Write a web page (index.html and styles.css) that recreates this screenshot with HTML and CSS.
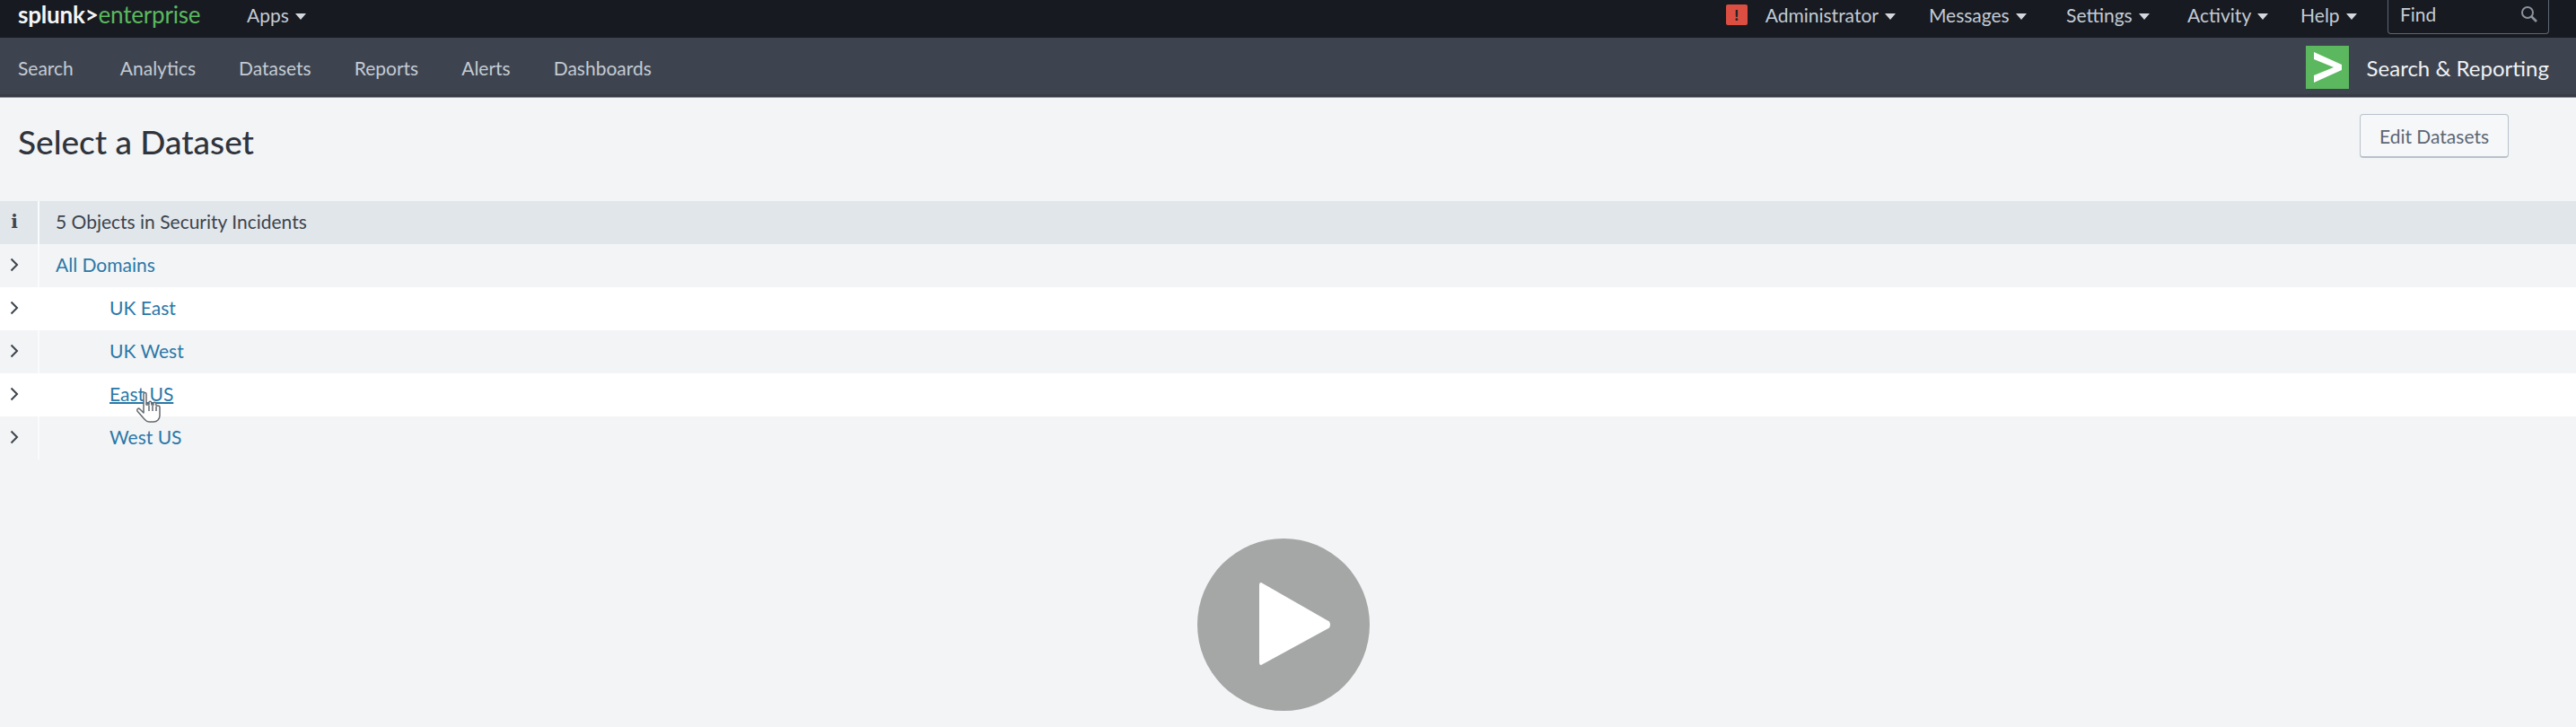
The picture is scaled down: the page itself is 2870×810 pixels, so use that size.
FILE: index.html
```html
<!DOCTYPE html>
<html lang="en">
<head>
  <meta charset="UTF-8">
  <title>Select a Dataset</title>
  <link rel="stylesheet" href="styles.css">
</head>
<body>
  <div class="topbar">
    <a class="brand"><span class="brand_splunk">splunk&gt;</span><span class="brand_product">enterprise</span></a>
    <a class="menu apps">Apps <i class="caret"></i></a>
    <div class="topbar_right">
      <span class="alert_badge">!</span>
      <a class="menu admin">Administrator <i class="caret"></i></a>
      <a class="menu messages">Messages <i class="caret"></i></a>
      <a class="menu settings">Settings <i class="caret"></i></a>
      <a class="menu activity">Activity <i class="caret"></i></a>
      <a class="menu help">Help <i class="caret"></i></a>
      <div class="find">
        <span>Find</span>
        <svg class="find_icon" width="20" height="20" viewBox="0 0 20 20" fill="none" stroke="#8b929b" stroke-width="2">
          <circle cx="8" cy="8" r="6"/>
          <path d="M12.5 12.5 L18 18" stroke-width="2.6"/>
        </svg>
      </div>
    </div>
  </div>

  <div class="appbar">
    <a class="tab tab_first">Search</a>
    <a class="tab">Analytics</a>
    <a class="tab">Datasets</a>
    <a class="tab">Reports</a>
    <a class="tab">Alerts</a>
    <a class="tab">Dashboards</a>
    <div class="app_label">
      <svg class="app_logo" width="48" height="48" viewBox="0 0 48 48">
        <rect width="48" height="48" fill="#5cb85f"/>
        <path d="M9 7 L40 21 L40 27 L9 41 L9 33 L31 24 L9 15 Z" fill="#fff"/>
      </svg>
      <span>Search &amp; Reporting</span>
    </div>
  </div>

  <div class="page_head">
    <h1>Select a Dataset</h1>
    <button type="button" class="edit_btn">Edit Datasets</button>
  </div>

  <div class="table">
    <div class="row row_info">
      <div class="cell_icon"><span class="info_i">i</span></div>
      <div class="cell_text">5 Objects in Security Incidents</div>
    </div>
    <div class="row row_grey">
      <div class="cell_icon"><svg class="chevron" viewBox="0 0 10 16"><path d="M1.5 1.5 L8 8 L1.5 14.5"/></svg></div>
      <div class="cell_text"><a class="link">All Domains</a></div>
    </div>
    <div class="row row_white">
      <div class="cell_icon"><svg class="chevron" viewBox="0 0 10 16"><path d="M1.5 1.5 L8 8 L1.5 14.5"/></svg></div>
      <div class="cell_text child"><a class="link">UK East</a></div>
    </div>
    <div class="row row_grey">
      <div class="cell_icon"><svg class="chevron" viewBox="0 0 10 16"><path d="M1.5 1.5 L8 8 L1.5 14.5"/></svg></div>
      <div class="cell_text child"><a class="link">UK West</a></div>
    </div>
    <div class="row row_white">
      <div class="cell_icon"><svg class="chevron" viewBox="0 0 10 16"><path d="M1.5 1.5 L8 8 L1.5 14.5"/></svg></div>
      <div class="cell_text child"><a class="link link_hover">East US</a></div>
    </div>
    <div class="row row_grey">
      <div class="cell_icon"><svg class="chevron" viewBox="0 0 10 16"><path d="M1.5 1.5 L8 8 L1.5 14.5"/></svg></div>
      <div class="cell_text child"><a class="link">West US</a></div>
    </div>
  </div>

  <!-- mouse pointer over East US -->
  <svg class="pointer" width="30" height="36" viewBox="0 0 30 36" fill="#fff" stroke="#666b70" stroke-width="1.5" stroke-linejoin="round">
    <path d="M9 3 C9 1 12 1 12 3 L12 15 L15 15 L15 12 C15 11 17.5 11 17.5 12 L18 15 L20 15 L20 13 C20 12 22.5 12 22.5 13 L23 16 L25 16 C26 16 27 17 27 18 L27 27 C27 31 24 34 20 34 L15 34 C12 34 11 32 9 30 L2 22 C1 20 3 18 5 20 L9 24 Z"/>
    <path d="M15 16 V22 M19 16 V22 M23 17 V22" fill="none"/>
  </svg>

  <!-- video play overlay -->
  <svg class="play" width="192" height="192" viewBox="0 0 192 192">
    <circle cx="96" cy="96" r="96" fill="#a5a7a6"/>
    <path d="M71 49 L147 92.5 Q149 96 147 99.5 L71 141 Q69 141 69 138 L69 52 Q69 49 71 49 Z" fill="#fff"/>
  </svg>
</body>
</html>
```

FILE: styles.css
```css
html,body{
  margin:0;
  height:100%;
}
body{
  height:810px;
  overflow:hidden;
  position:relative;
  background:#f3f4f6;
  font-family:"Lato","Liberation Sans",sans-serif;
  color:#3c444d;
}
a{
  text-decoration:none;
}

/* top black bar */
.topbar{
  height:42px;
  box-sizing:border-box;
  background:#171a21;
  display:flex;
  align-items:center;
  padding:0 0 10px 20px;
  color:#c3cbd4;
  font-size:21px;
}
.brand{
  font-size:26px;
  width:255px;
  white-space:nowrap;
  letter-spacing:-.2px;
}
.brand_splunk{
  color:#f4f5f6;
  font-weight:700;
}
.brand_product{
  color:#5cb85f;
}
.menu{
  white-space:nowrap;
}
.caret{
  display:inline-block;
  width:0;
  height:0;
  margin-left:2px;
  vertical-align:3px;
  border-left:6px solid transparent;
  border-right:6px solid transparent;
  border-top:7px solid #d3d8de;
}
.topbar_right{
  margin-left:auto;
  display:flex;
  align-items:center;
  height:100%;
  padding-right:30px;
}
.alert_badge{
  width:24px;
  height:23px;
  margin-right:20px;
  background:#dc4e41;
  border-radius:2px;
  color:#222;
  font-weight:900;
  font-size:17px;
  line-height:23px;
  text-align:center;
}
.admin{ margin-right:37px; }
.messages{ margin-right:44px; }
.settings{ margin-right:42px; }
.activity{ margin-right:36px; }
.help{ margin-right:34px; }
.find{
  width:180px;
  height:38px;
  align-self:flex-start;
  box-sizing:border-box;
  border:1px solid #5c6773;
  border-top:none;
  border-radius:0 0 4px 4px;
  display:flex;
  align-items:center;
  justify-content:space-between;
  padding:0 11px 6px 13px;
}

/* app bar */
.appbar{
  height:66px;
  background:#3e444f;
  border-bottom:1px solid #8a9097;
  box-shadow:inset 0 -3px 0 #363b45;
  display:flex;
  align-items:center;
  padding-left:20px;
  color:#c3cbd4;
  font-size:21px;
}
.tab{
  margin-right:48px;
}
.tab_first{
  margin-right:52px;
}
.app_label{
  margin-left:auto;
  padding-right:30px;
  display:flex;
  align-items:center;
  gap:20px;
  color:#f0f2f4;
  font-size:24px;
}

/* title row */
.page_head{
  height:115px;
  box-sizing:border-box;
  display:flex;
  justify-content:space-between;
  align-items:flex-start;
  padding:18px 75px 0 20px;
}
.page_head h1{
  margin:8px 0 0;
  font-size:37px;
  font-weight:500;
  color:#2f343d;
}
.edit_btn{
  width:166px;
  height:49px;
  background:#f6f7f9;
  border:1px solid #b9c1ca;
  border-bottom-width:2px;
  border-radius:4px;
  color:#5c6773;
  font-family:inherit;
  font-size:21px;
  padding:0;
}

/* dataset table */
.row{
  height:48px;
  box-sizing:border-box;
  display:flex;
  font-size:21px;
}
.row_info{
  background:#e1e6eb;
}
.row_grey{
  background:#f3f4f6;
}
.row_white{
  background:#fff;
}
.cell_icon{
  width:44px;
  border-right:2px solid #fafbfc;
  display:flex;
  align-items:center;
  justify-content:center;
  padding:0 10px 3px 0;
  box-sizing:border-box;
}
.row_white .cell_icon{
  border-right-color:#fff;
}
.info_i{
  font-family:"DejaVu Serif",serif;
  font-weight:700;
  font-size:20px;
  color:#3c444d;
}
.chevron{
  width:10px;
  height:16px;
  fill:none;
  stroke:#3c444d;
  stroke-width:2;
}
.cell_text{
  padding:0 0 3px 18px;
  display:flex;
  align-items:center;
}
.child{
  padding-left:78px;
}
.link{
  color:#2a78a8;
}
.link_hover{
  text-decoration:underline;
  text-decoration-thickness:2px;
}

/* things lying over the page */
.pointer{
  position:absolute;
  left:151px;
  top:436px;
}
.play{
  position:absolute;
  left:1334px;
  top:600px;
}
```
